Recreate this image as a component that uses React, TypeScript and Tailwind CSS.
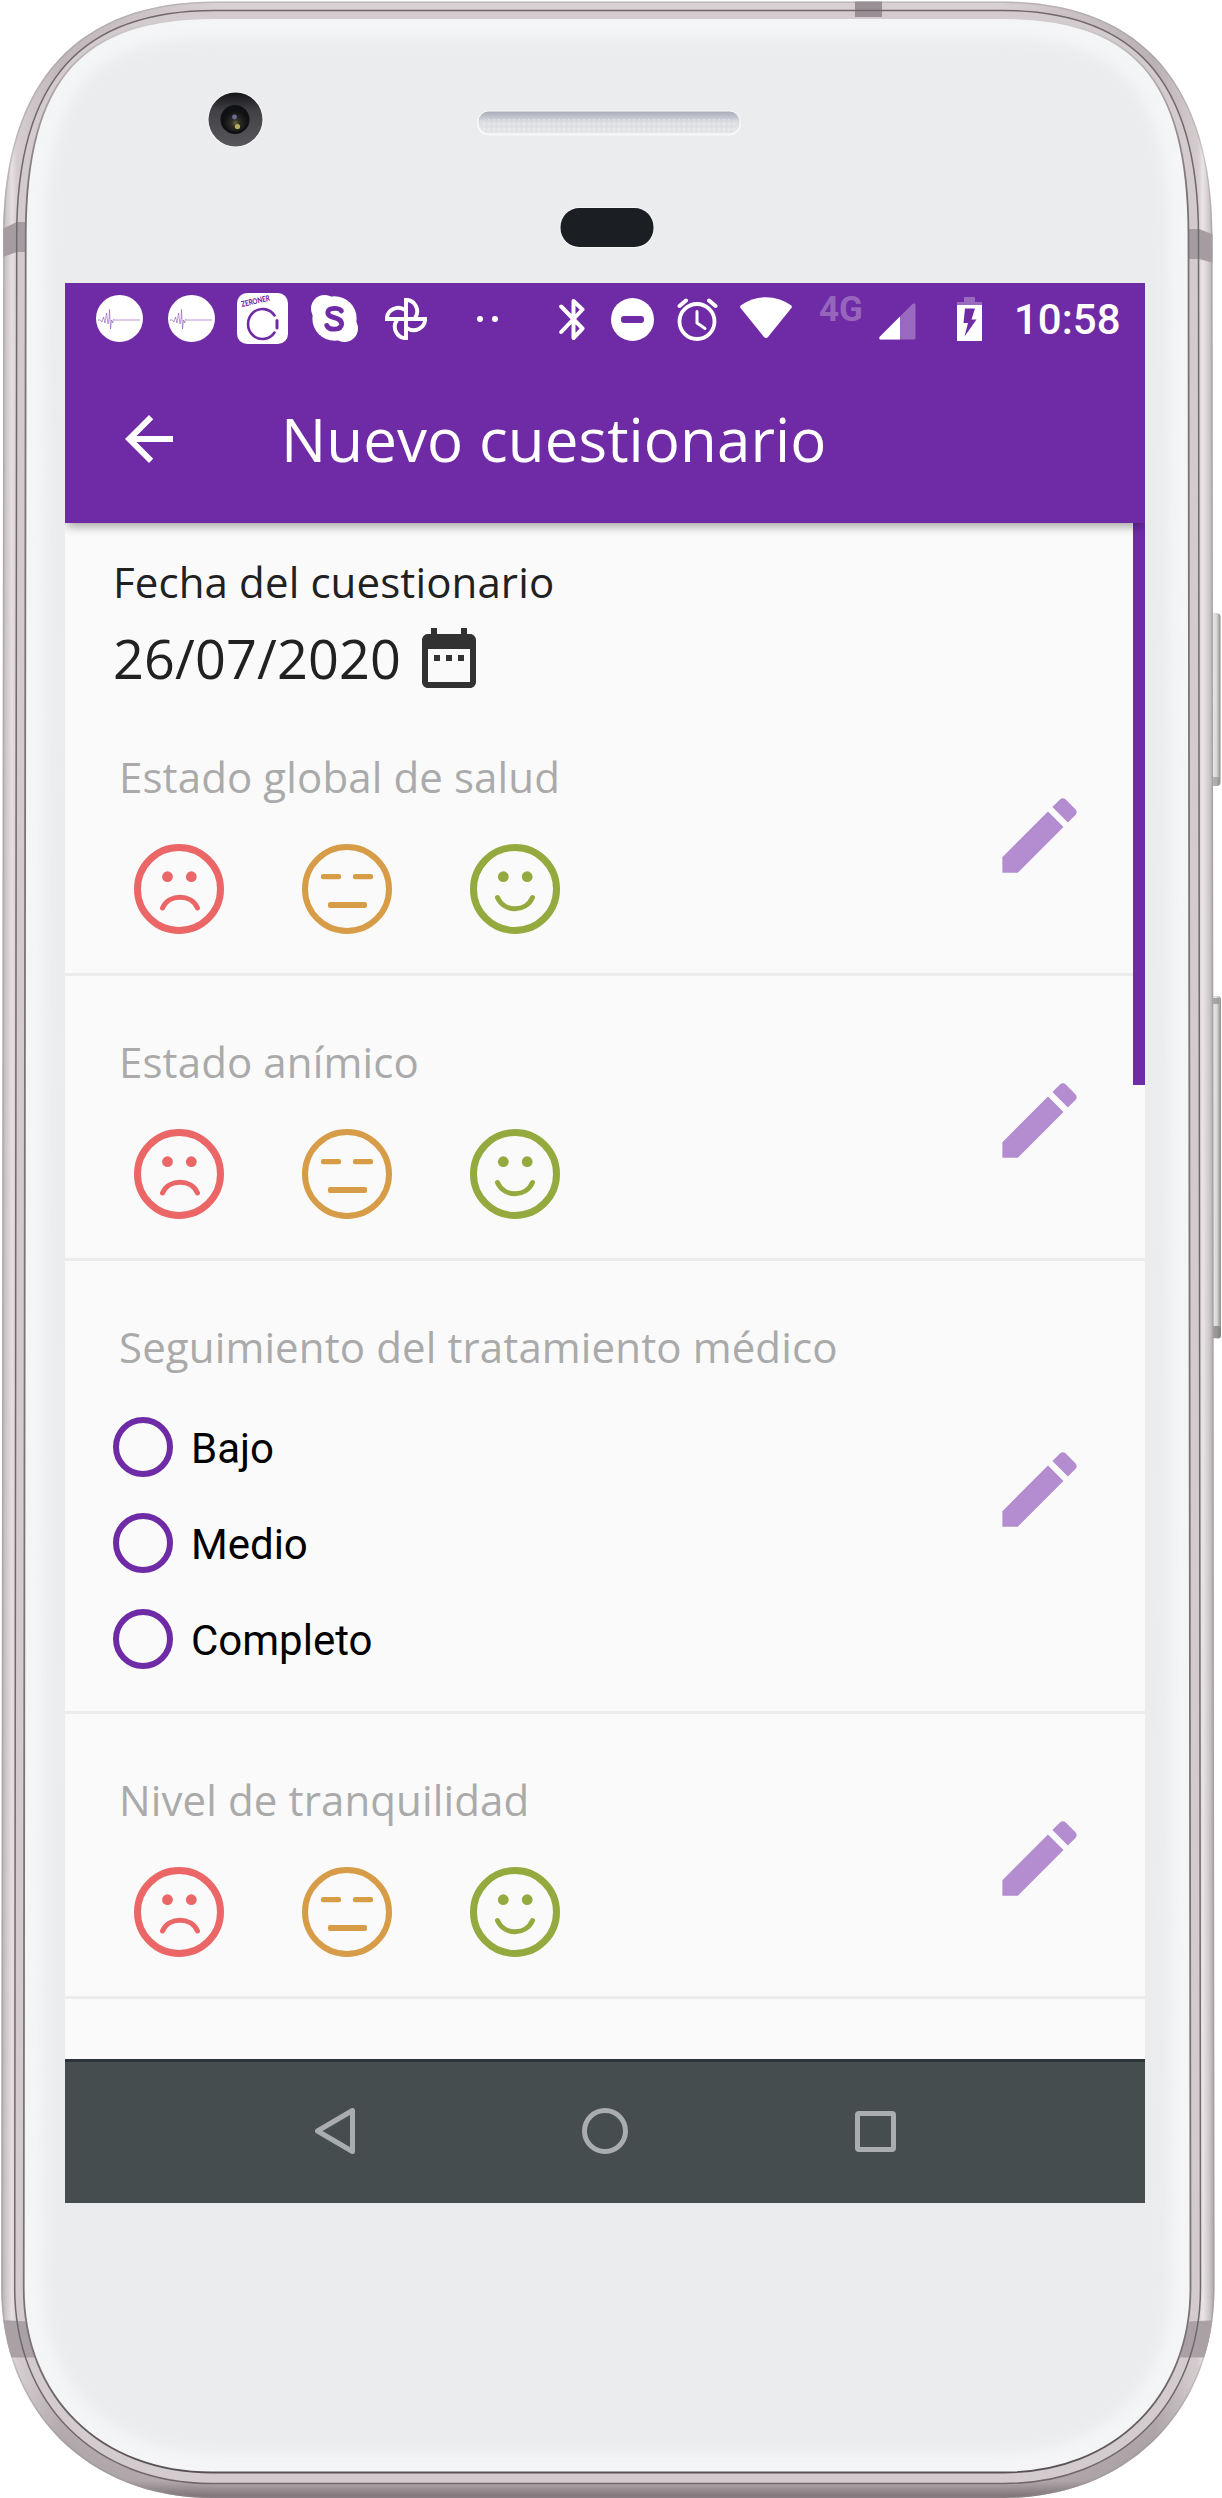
import type { ReactNode } from 'react'

type Face = 'sad' | 'neutral' | 'happy'

interface Question {
  title: string
  options?: string[]
}

const QUESTIONS: Question[] = [
  { title: 'Estado global de salud' },
  { title: 'Estado anímico' },
  { title: 'Seguimiento del tratamiento médico', options: ['Bajo', 'Medio', 'Completo'] },
  { title: 'Nivel de tranquilidad' },
]

const FACES: Face[] = ['sad', 'neutral', 'happy']

// closed outline of the phone body; ct / cb tighten the top and bottom corners
function outline(l: number, t: number, r: number, b: number, ct: number, cb: number) {
  return [
    `M${l} 236 C${l} ${t + ct} ${l + ct} ${t} 215 ${t}`,
    `L1002 ${t} C${r - ct} ${t} ${r} ${t + ct} ${r} 236`,
    `L${r + 2} 2288 C${r + 2} ${b - cb} ${r + 2 - cb} ${b} 1004 ${b}`,
    `L212 ${b} C${l - 2 + cb} ${b} ${l - 2} ${b - cb} ${l - 2} 2288 Z`,
  ].join(' ')
}

const OUTER = outline(3.2, 1.5, 1212.5, 2498, 77, 87)
const SEAM = outline(16.7, 10.5, 1198.5, 2483.5, 67, 80)
const GLASS = outline(25.7, 18, 1188.5, 2472.5, 58, 76)

function PhoneBody() {
  return (
    <svg className="absolute inset-0" width="1222" height="2498" viewBox="0 0 1222 2498">
      <defs>
        <linearGradient id="side" gradientUnits="userSpaceOnUse" x1="1" y1="0" x2="1215" y2="0">
          <stop offset="0" stopColor="#b3abae" />
          <stop offset="0.004" stopColor="#cdc6c8" />
          <stop offset="0.009" stopColor="#e6e0e1" />
          <stop offset="0.013" stopColor="#d5cecf" />
          <stop offset="0.05" stopColor="#bfb7ba" />
          <stop offset="0.18" stopColor="#d8d1d3" />
          <stop offset="0.82" stopColor="#d8d1d3" />
          <stop offset="0.95" stopColor="#b9b1b4" />
          <stop offset="0.986" stopColor="#d5cecf" />
          <stop offset="0.99" stopColor="#e9e4e5" />
          <stop offset="0.995" stopColor="#d0c9cb" />
          <stop offset="1" stopColor="#a79fa2" />
        </linearGradient>
        <linearGradient id="chin" gradientUnits="userSpaceOnUse" x1="0" y1="2380" x2="0" y2="2498">
          <stop offset="0" stopColor="#6e6468" stopOpacity="0" />
          <stop offset="0.85" stopColor="#6e6468" stopOpacity="0.3" />
          <stop offset="1" stopColor="#6e6468" stopOpacity="0.9" />
        </linearGradient>
        <linearGradient id="rimLine" gradientUnits="userSpaceOnUse" x1="0" y1="18" x2="0" y2="2472">
          <stop offset="0" stopColor="#d3cdd0" />
          <stop offset="0.015" stopColor="#bdb6b9" />
          <stop offset="0.07" stopColor="#7b7276" />
          <stop offset="0.95" stopColor="#7b7276" />
          <stop offset="1" stopColor="#595155" />
        </linearGradient>
        <linearGradient id="grille" x1="0" y1="0" x2="0" y2="1">
          <stop offset="0" stopColor="#a9acb8" />
          <stop offset="0.3" stopColor="#c6c9d1" />
          <stop offset="0.45" stopColor="#dcdee2" />
          <stop offset="1" stopColor="#e6e8ea" />
        </linearGradient>
        <linearGradient id="key" x1="0" y1="0" x2="1" y2="0">
          <stop offset="0" stopColor="#a9a9a7" />
          <stop offset="0.25" stopColor="#e6e8e5" />
          <stop offset="0.6" stopColor="#d9dcda" />
          <stop offset="1" stopColor="#8f8d8c" />
        </linearGradient>
        <radialGradient id="lens" cx="0.5" cy="0.65" r="0.5">
          <stop offset="0" stopColor="#66663a" />
          <stop offset="0.35" stopColor="#2c2d24" />
          <stop offset="1" stopColor="#101114" />
        </radialGradient>
        <linearGradient id="cam" x1="0" y1="0" x2="0" y2="1">
          <stop offset="0" stopColor="#141417" />
          <stop offset="0.35" stopColor="#434347" />
          <stop offset="1" stopColor="#57575b" />
        </linearGradient>
        <pattern id="mesh" width="5" height="5" patternUnits="userSpaceOnUse">
          <circle cx="1.5" cy="1.5" r="1" fill="#cdd0d5" />
          <circle cx="4" cy="4" r="1" fill="#f3f4f5" />
        </pattern>
        <clipPath id="outerClip">
          <path d={OUTER} />
        </clipPath>
        <clipPath id="glassClip">
          <path d={GLASS} />
        </clipPath>
        <filter id="soft" x="-5%" y="-5%" width="110%" height="110%">
          <feGaussianBlur stdDeviation="7" />
        </filter>
      </defs>

      {/* side keys */}
      <rect x="1210" y="613" width="10.5" height="173" rx="4" fill="url(#key)" />
      <rect x="1210" y="777" width="10" height="9" rx="3" fill="#8d8d8c" opacity="0.6" />
      <rect x="1210" y="996" width="11" height="343" rx="4" fill="url(#key)" />
      <rect x="1210" y="998" width="9" height="6" fill="#8d8d8c" opacity="0.7" />
      <rect x="1210" y="1326" width="11" height="12" rx="3" fill="#7b7a79" opacity="0.7" />

      {/* metal rim */}
      <path d={OUTER} fill="url(#side)" />
      <path d={OUTER} fill="url(#chin)" />
      <path d={OUTER} fill="none" stroke="#9a9296" strokeWidth="3" opacity="0.4" clipPath="url(#outerClip)" />
      <path d={SEAM} fill="#d3ccce" />

      {/* antenna bands */}
      <g clipPath="url(#outerClip)">
        <path d="M0 230 L17 222 H27 V252 H17 L0 258 Z" fill="#a49ca0" />
        <path d="M1187 229 H1199 L1214 235 V263 L1199 259 H1187 Z" fill="#a49ca0" />
        <path d="M855 0 H882 V18 H855 Z" fill="#989094" />
        <path d="M0 2320 L27 2321.5 L36 2357.5 H0 Z" fill="#a9a1a5" />
        <path d="M1220 2320 L1189 2321.5 L1180 2357.5 H1220 Z" fill="#a9a1a5" />
      </g>
      <path d={SEAM} fill="none" stroke="#71686c" strokeWidth="1.5" />

      {/* front glass */}
      <path d={GLASS} fill="#ebecee" />
      <g clipPath="url(#glassClip)">
        <path d={GLASS} fill="none" stroke="#f4f5f7" strokeWidth="40" filter="url(#soft)" />
      </g>
      <path d={GLASS} fill="none" stroke="url(#rimLine)" strokeWidth="1.8" />

      {/* camera, earpiece, proximity sensor */}
      <circle cx="235.5" cy="119.5" r="28" fill="#f8f8f9" />
      <circle cx="235.5" cy="119.5" r="27" fill="url(#cam)" />
      <circle cx="235" cy="119.5" r="14.5" fill="#0f1013" />
      <circle cx="235.5" cy="119.5" r="12" fill="url(#lens)" />
      <circle cx="234.5" cy="117" r="2.4" fill="#6a6d9c" />
      <circle cx="237.5" cy="126.5" r="2.6" fill="#b4b062" />
      <rect x="477" y="110.5" width="264" height="25" rx="12" fill="#f8f8f9" />
      <rect x="478.5" y="111.5" width="261" height="22" rx="10" fill="url(#grille)" />
      <rect x="482" y="119" width="254" height="13" rx="6" fill="url(#mesh)" opacity="0.5" />
      <rect x="559.5" y="207" width="95" height="41" rx="20" fill="#f6f6f7" />
      <rect x="560.5" y="208" width="93" height="39" rx="19" fill="#1b1e22" />
    </svg>
  )
}

function PulseIcon() {
  return (
    <svg width="47" height="47" viewBox="0 0 47 47" className="shrink-0">
      <circle cx="23.5" cy="23.5" r="23.5" fill="#fff" />
      <path
        d="M2 25h2.500l1.500 2 1.500-5 1.500 6 1.500-10 1.500 11 1-5 .5-9.500 1 19.500 1-9 1.200 3 .8-4"
        fill="none"
        stroke="#6f2da8"
        strokeWidth="0.8"
        opacity="0.6"
      />
      <path d="M18 25h26" stroke="#b895d6" strokeWidth="1" />
    </svg>
  )
}

function ZeronerIcon() {
  return (
    <svg width="51" height="51" viewBox="0 0 51 51" className="shrink-0 overflow-visible">
      <rect width="51" height="51" rx="10" fill="#fff" />
      <text
        x="5"
        y="14"
        transform="rotate(-13 5 14)"
        fontFamily="Lato, sans-serif"
        fontSize="8"
        fontWeight="900"
        textLength="29"
        lengthAdjust="spacingAndGlyphs"
        fill="#6f2ba5"
      >
        ZERONER
      </text>
      <path d="M37.500 22.500A14.500 15 0 1 0 37.500 39.500" fill="none" stroke="#6f2ba5" strokeWidth="2.600" strokeLinecap="round" />
      <path d="M40 27.500v7.500" stroke="#6f2ba5" strokeWidth="3" strokeLinecap="round" />
    </svg>
  )
}

function SkypeIcon() {
  return (
    <svg width="47" height="47" viewBox="0 0 24 24" className="shrink-0">
      <circle cx="12" cy="12" r="11.300" fill="#fff" />
      <circle cx="6.900" cy="6.900" r="6.900" fill="#fff" />
      <circle cx="17.100" cy="17.100" r="6.900" fill="#fff" />
      <path
        d="M15.500 8.100C14.600 6.700 9 5.900 8.600 8.900C8.500 12.500 15.800 10.600 15.600 14.900C15.300 18.100 9.400 18.200 8.100 15.600"
        fill="none"
        stroke="#6f2ba5"
        strokeWidth="2.500"
        strokeLinecap="round"
      />
    </svg>
  )
}

function PinwheelIcon() {
  const blade = 'M0 2 V-19.200 A11.500 11.500 0 0 1 9 -1'
  return (
    <svg width="42" height="42" viewBox="-21 -21 42 42" className="shrink-0">
      <g fill="none" stroke="#fff" strokeWidth="3.900">
        <path d={blade} />
        <path d={blade} transform="rotate(90)" />
        <path d={blade} transform="rotate(180)" />
        <path d={blade} transform="rotate(270)" />
      </g>
    </svg>
  )
}

function BluetoothIcon() {
  return (
    <svg width="27" height="43" viewBox="0 0 27 43" className="shrink-0">
      <path
        d="M2.200 8.500L23.500 30.500 14.500 40V3L23.500 11.500 2.200 34"
        fill="none"
        stroke="#fff"
        strokeWidth="4"
        strokeLinecap="round"
        strokeLinejoin="round"
      />
    </svg>
  )
}

function DoNotDisturbIcon() {
  return (
    <svg width="43" height="43" viewBox="0 0 43 43" className="shrink-0">
      <circle cx="21.500" cy="21.500" r="21.500" fill="#fff" />
      <rect x="10" y="18" width="23" height="7" rx="3" fill="#6f2ba5" />
    </svg>
  )
}

function AlarmIcon() {
  return (
    <svg width="41" height="43" viewBox="0 0 41 43" className="shrink-0">
      <g fill="none" stroke="#fff" strokeLinecap="round">
        <circle cx="20" cy="23.500" r="17.500" strokeWidth="3.800" />
        <path d="M2.500 8L9 2.500M38.500 8L32 2.500" strokeWidth="4" />
        <path d="M20 13.500V25l8 5.500" strokeWidth="3" strokeLinejoin="round" />
      </g>
    </svg>
  )
}

function WifiIcon() {
  return (
    <svg width="52" height="42" viewBox="0 0 52 42" className="shrink-0">
      <path d="M1 8.200C16-2.500 36-2.500 51 8.200c1 .8 1.200 1.800.4 2.900L28 40c-1.200 1.400-2.800 1.400-4 0L.6 11.100C-.2 10 0 9 1 8.200z" fill="#fff" />
    </svg>
  )
}

function SignalIcon() {
  return (
    <svg width="37" height="37" viewBox="0 0 37 37" className="shrink-0">
      <path d="M1 33.500L33.500 1C35 0 36.500.5 36.500 2.500V34.500c0 1.500-.7 2-2 2H2C0 36.500-.2 35 1 33.500z" fill="#9a69c0" />
      <path d="M21 13.500V36.500H2C0 36.500-.2 35 1 33.500z" fill="#fff" />
    </svg>
  )
}

function BatteryIcon() {
  return (
    <svg width="25" height="44" viewBox="0 0 25 44" className="shrink-0">
      <path d="M7 0h11v5h7v3H0V5h7z" fill="#9a69c0" />
      <path d="M0 8h25v36H0z" fill="#fff" />
      <path d="M8 11.500h10l-3.500 11h5L7.500 39.500l3.500-13.500H6.500z" fill="#6f2ba5" />
    </svg>
  )
}

function StatusBar() {
  return (
    <div className="flex h-[72px] pl-[31px] pt-3 text-white">
      <PulseIcon />
      <div className="ml-[25px]">
        <PulseIcon />
      </div>
      <div className="-mt-0.5 ml-[22px]">
        <ZeronerIcon />
      </div>
      <div className="ml-[23px]">
        <SkypeIcon />
      </div>
      <div className="ml-[27px] mt-[3px]">
        <PinwheelIcon />
      </div>
      <div className="ml-[50px] mt-[21px] flex gap-[9px]">
        <span className="size-1.5 rounded-full bg-white" />
        <span className="size-1.5 rounded-full bg-white" />
      </div>
      <div className="ml-[61px] mt-[3px]">
        <BluetoothIcon />
      </div>
      <div className="ml-[25px] mt-[3px]">
        <DoNotDisturbIcon />
      </div>
      <div className="ml-[23px] mt-[3px]">
        <AlarmIcon />
      </div>
      <div className="ml-[22px] mt-0.5">
        <WifiIcon />
      </div>
      <span className="ml-[27px] w-[45px] font-[Roboto,sans-serif] text-[35px] font-bold leading-[29px] text-[#9666bd]">4G</span>
      <div className="ml-[15px] mt-2">
        <SignalIcon />
      </div>
      <div className="ml-[41px] mt-0.5">
        <BatteryIcon />
      </div>
      <span className="ml-[32px] font-[Roboto,sans-serif] text-[42px] font-medium leading-[50px]">10:58</span>
    </div>
  )
}

function AppBar() {
  return (
    <div className="flex h-[168px] items-center pl-12">
      <svg width="72" height="72" viewBox="0 0 24 24" fill="#fff">
        <path d="M20 11H7.830l5.590-5.590L12 4l-8 8 8 8 1.410-1.410L7.830 13H20v-2z" />
      </svg>
      <h1 className="ml-24 text-[60px] leading-[82px] tracking-[0.1px] text-white">Nuevo cuestionario</h1>
    </div>
  )
}

function FaceIcon({ face }: { face: Face }) {
  if (face === 'sad') {
    return (
      <svg width="90" height="90" viewBox="0 0 90 90">
        <circle cx="45" cy="45" r="41.500" fill="none" stroke="#eb6767" strokeWidth="7" />
        <circle cx="33.500" cy="32.700" r="5.400" fill="#eb6767" />
        <circle cx="57.300" cy="32.700" r="5.400" fill="#eb6767" />
        <path d="M28.500 64C34.500 49.500 57.500 49.500 63.500 64" fill="none" stroke="#eb6767" strokeWidth="5" strokeLinecap="round" />
      </svg>
    )
  }
  if (face === 'neutral') {
    return (
      <svg width="90" height="90" viewBox="0 0 90 90">
        <circle cx="45" cy="45" r="42" fill="none" stroke="#d79c48" strokeWidth="6" />
        <g fill="#d79c48">
          <rect x="19" y="30" width="20" height="5.300" rx="2" />
          <rect x="51" y="30" width="20" height="5.300" rx="2" />
          <rect x="26" y="58" width="39" height="6" rx="2" />
        </g>
      </svg>
    )
  }
  return (
    <svg width="90" height="90" viewBox="0 0 90 90">
      <circle cx="45" cy="45" r="41.500" fill="none" stroke="#94aa3e" strokeWidth="7" />
      <circle cx="33.300" cy="32.700" r="5.400" fill="#94aa3e" />
      <circle cx="57.200" cy="32.700" r="5.400" fill="#94aa3e" />
      <path d="M27.500 53.500C34 68.500 56 68.500 62.500 53.500" fill="none" stroke="#94aa3e" strokeWidth="5" strokeLinecap="round" />
    </svg>
  )
}

function QuestionRow({ title, children }: { title: string; children: ReactNode }) {
  return (
    <section className="flex items-center justify-between border-b-[3px] border-[#ececec] pr-14">
      <div className="pt-[56.500px]">
        <h2 className="pl-[54px] text-[42px] leading-[57px] tracking-[0.12px] text-[#aaaaaa]">{title}</h2>
        {children}
      </div>
      <button className="mt-[7px]" aria-label="Editar">
        <svg width="99" height="99" viewBox="0 0 24 24" fill="#b38dcf">
          <path d="M3 17.250V21h3.750L17.810 9.940l-3.750-3.750L3 17.250zM20.710 7.040c.39-.39.39-1.020 0-1.410l-2.340-2.340c-.39-.39-1.020-.39-1.410 0l-1.830 1.830 3.750 3.750 1.830-1.830z" />
        </svg>
      </button>
    </section>
  )
}

function NavBar() {
  return (
    <div className="flex h-36 items-center justify-center border-t-[3px] border-[#2d3437] bg-[#464d4f]">
      <div className="flex w-[270px] justify-center">
        <svg width="46" height="46" viewBox="0 0 46 46" className="-mt-[3px]">
          <path d="M40.500 2.500V43.500L5.500 23z" fill="none" stroke="#a9adaf" strokeWidth="5" strokeLinejoin="round" />
        </svg>
      </div>
      <div className="flex w-[270px] justify-center">
        <span className="-mt-[3px] size-[46px] rounded-full border-[5px] border-[#a9adaf]" />
      </div>
      <div className="flex w-[270px] justify-center">
        <span className="-mt-[3px] size-[41px] rounded-[4px] border-[5px] border-[#a9adaf]" />
      </div>
    </div>
  )
}

export default function App() {
  return (
    <div className="relative h-[2498px] w-[1222px] overflow-hidden bg-white pl-[65px] pt-[283px]">
      <PhoneBody />

      <div className="relative flex h-[1920px] w-[1080px] flex-col bg-[#fafafa] font-['Open_Sans',sans-serif]">
        <header className="z-10 bg-[#6f2ba5] shadow-[0_6px_9px_-2px_rgba(0,0,0,0.32)] [clip-path:inset(0_0_-20px_0)]">
          <StatusBar />
          <AppBar />
        </header>

        <main className="relative flex-1 overflow-hidden">
          <div className="h-[168px] pl-12 pt-[30px] text-[#212121]">
            <p className="text-[42px] leading-[57px] tracking-[0.12px]">Fecha del cuestionario</p>
            <div className="mt-3 flex h-[72px] items-center">
              <span className="text-[54px] leading-[74px] tracking-[0.15px]">26/07/2020</span>
              <svg width="72" height="72" viewBox="0 0 24 24" fill="#323232" className="ml-3">
                <path d="M9 11H7v2h2v-2zm4 0h-2v2h2v-2zm4 0h-2v2h2v-2zm2-7h-1V2h-2v2H8V2H6v2H5c-1.110 0-1.990.9-1.990 2L3 20c0 1.100.89 2 2 2h14c1.100 0 2-.9 2-2V6c0-1.100-.9-2-2-2zm0 16H5V9h14v11z" />
              </svg>
            </div>
          </div>

          {QUESTIONS.map((question) => (
            <QuestionRow key={question.title} title={question.title}>
              {question.options ? (
                <div className="mt-[42.500px] flex flex-col gap-9 pb-[42px] pl-12">
                  {question.options.map((option) => (
                    <label key={option} className="flex h-[60px] items-center">
                      <span className="size-[60px] rounded-full border-[6px] border-[#6f2ba5]" />
                      <span className="ml-[18px] pt-[3px] font-[Roboto,sans-serif] text-[42px] leading-[50px] text-black">{option}</span>
                    </label>
                  ))}
                </div>
              ) : (
                <div className="mt-[39.500px] flex gap-[78px] pb-[39px] pl-[69px]">
                  {FACES.map((face) => (
                    <FaceIcon key={face} face={face} />
                  ))}
                </div>
              )}
            </QuestionRow>
          ))}

          {/* scroll indicator */}
          <div className="absolute right-0 top-0 h-[562px] w-3 bg-[#6f2ba5]" />
        </main>

        <NavBar />
      </div>
    </div>
  )
}
